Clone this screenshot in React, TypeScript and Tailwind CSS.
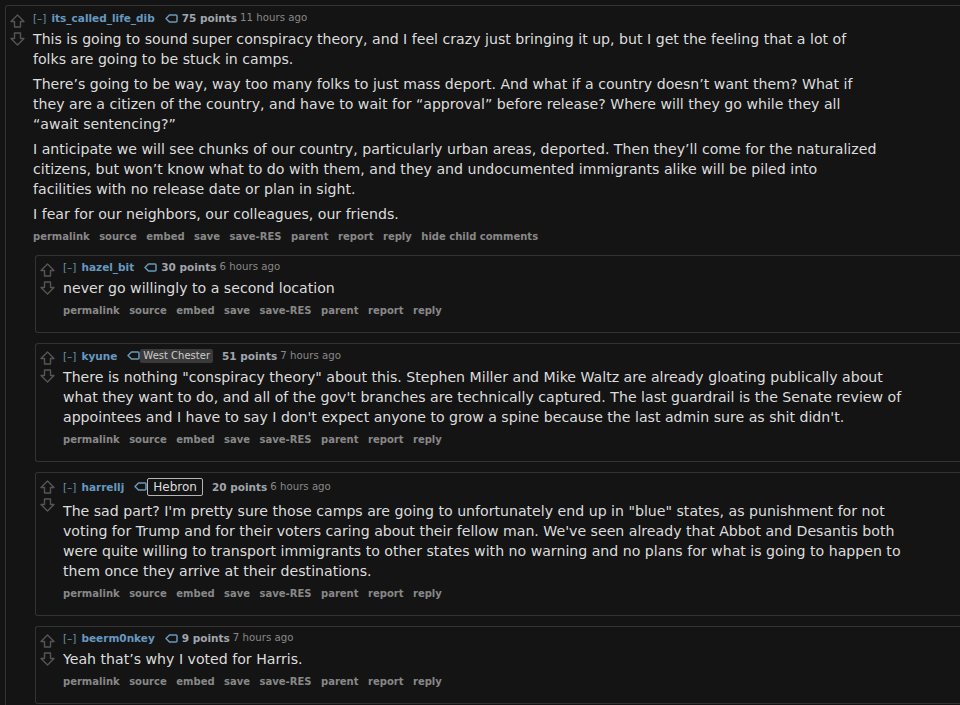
import React from "react";

const font = "font-['DejaVu_Sans',Verdana,sans-serif]";

function Arrow({ down }: { down?: boolean }) {
  return (
    <svg width="15" height="14" viewBox="0 0 15 14" className="block">
      <path
        d="M7.5 1 L14 7.5 H10.5 V13 H4.5 V7.5 H1 Z"
        fill="none"
        stroke="#555"
        strokeWidth="1.4"
        strokeLinejoin="round"
        transform={down ? "rotate(180 7.5 7)" : undefined}
      />
    </svg>
  );
}

function TagIcon() {
  return (
    <svg width="13" height="9" viewBox="0 0 13 9" className="block">
      <path
        d="M4.5 1 H11 Q12 1 12 2 V7 Q12 8 11 8 H4.5 L1 4.5 Z"
        fill="none"
        stroke="#6a98bb"
        strokeWidth="1.5"
        strokeLinejoin="round"
      />
    </svg>
  );
}

interface CommentProps {
  user: string;
  points: string;
  time: string;
  flair?: string;
  boxedFlair?: boolean;
  paragraphs: string[][];
  hideChild?: boolean;
  top?: boolean;
  children?: React.ReactNode;
}

function Comment({ user, points, time, flair, boxedFlair, paragraphs, hideChild, top, children }: CommentProps) {
  const buttons = ["permalink", "source", "embed", "save", "save-RES", "parent", "report", "reply"];
  if (hideChild) buttons.push("hide child comments");
  const taglineHeight = boxedFlair ? "min-h-[21px]" : flair ? "min-h-[17px]" : "min-h-[16px]";
  return (
    <div
      className={`flex rounded-l-[3px] border border-r-0 border-[#333] bg-[#141414] pb-[13px] ${top ? "pt-[4px]" : "pt-[3px]"}`}
    >
      <div className="flex w-[27px] shrink-0 flex-col gap-[4px] pt-[4px] pl-[4px]">
        <Arrow />
        <Arrow down />
      </div>
      <div className="min-w-0 flex-1">
        <div
          className={`flex ${taglineHeight} items-center text-[10.5px] leading-[16px] text-[#888] whitespace-nowrap`}
        >
          <span className="mr-[5px] text-[#6a8fab]">[–]</span>
          <span className="font-bold text-[#6699c0]">{user}</span>
          <span className="ml-[10px]">
            <TagIcon />
          </span>
          {flair && !boxedFlair && (
            <span className="mr-[9px] rounded-[2px] bg-[#3a3a3a] px-[3px] text-[10px] leading-[14px] text-[#cccccc]">
              {flair}
            </span>
          )}
          {flair && boxedFlair && (
            <span className="mr-[9px] rounded-[2px] border border-[#b5b5b5] px-[5px] text-[12px] leading-[16px] text-[#dddddd]">
              {flair}
            </span>
          )}
          <span className={`${flair ? "" : "ml-[4px]"} font-bold text-[#a0a6ad]`}>{points}</span>
          <span className="ml-[3px] text-[10.2px]">{time}</span>
        </div>
        <div className={`${boxedFlair ? "mt-[4px]" : "mt-[3px]"} text-[14.13px] leading-[20px] text-[#dddddd]`}>
          {paragraphs.map((lines, i) => (
            <p key={i} className="mb-[5px] whitespace-nowrap">
              {lines.map((l, j) => (
                <React.Fragment key={j}>
                  {l}
                  {j < lines.length - 1 && <br />}
                </React.Fragment>
              ))}
            </p>
          ))}
        </div>
        <div className="flex gap-[9.5px] text-[10px] leading-[16px] font-bold text-[#888] whitespace-nowrap">
          {buttons.map((b) => (
            <span key={b}>{b}</span>
          ))}
        </div>
        {children && <div className="mt-[10px] ml-[2px] flex flex-col gap-[10px]">{children}</div>}
      </div>
    </div>
  );
}

export default function App() {
  return (
    <div className={`${font} h-[705px] w-full overflow-hidden bg-[#141414] pt-[5px] pl-[5px]`}>
      <Comment
        top
        user="its_called_life_dib"
        points="75 points"
        time="11 hours ago"
        hideChild
        paragraphs={[
          [
            "This is going to sound super conspiracy theory, and I feel crazy just bringing it up, but I get the feeling that a lot of",
            "folks are going to be stuck in camps.",
          ],
          [
            "There’s going to be way, way too many folks to just mass deport. And what if a country doesn’t want them? What if",
            "they are a citizen of the country, and have to wait for “approval” before release? Where will they go while they all",
            "“await sentencing?”",
          ],
          [
            "I anticipate we will see chunks of our country, particularly urban areas, deported. Then they’ll come for the naturalized",
            "citizens, but won’t know what to do with them, and they and undocumented immigrants alike will be piled into",
            "facilities with no release date or plan in sight.",
          ],
          ["I fear for our neighbors, our colleagues, our friends."],
        ]}
      >
        <Comment
          user="hazel_bit"
          points="30 points"
          time="6 hours ago"
          paragraphs={[["never go willingly to a second location"]]}
        />
        <Comment
          user="kyune"
          points="51 points"
          time="7 hours ago"
          flair="West Chester"
          paragraphs={[
            [
              'There is nothing "conspiracy theory" about this. Stephen Miller and Mike Waltz are already gloating publically about',
              "what they want to do, and all of the gov't branches are technically captured. The last guardrail is the Senate review of",
              "appointees and I have to say I don't expect anyone to grow a spine because the last admin sure as shit didn't.",
            ],
          ]}
        />
        <Comment
          user="harrellj"
          points="20 points"
          time="6 hours ago"
          flair="Hebron"
          boxedFlair
          paragraphs={[
            [
              'The sad part? I\'m pretty sure those camps are going to unfortunately end up in "blue" states, as punishment for not',
              "voting for Trump and for their voters caring about their fellow man. We've seen already that Abbot and Desantis both",
              "were quite willing to transport immigrants to other states with no warning and no plans for what is going to happen to",
              "them once they arrive at their destinations.",
            ],
          ]}
        />
        <Comment
          user="beerm0nkey"
          points="9 points"
          time="7 hours ago"
          paragraphs={[["Yeah that’s why I voted for Harris."]]}
        />
      </Comment>
    </div>
  );
}
